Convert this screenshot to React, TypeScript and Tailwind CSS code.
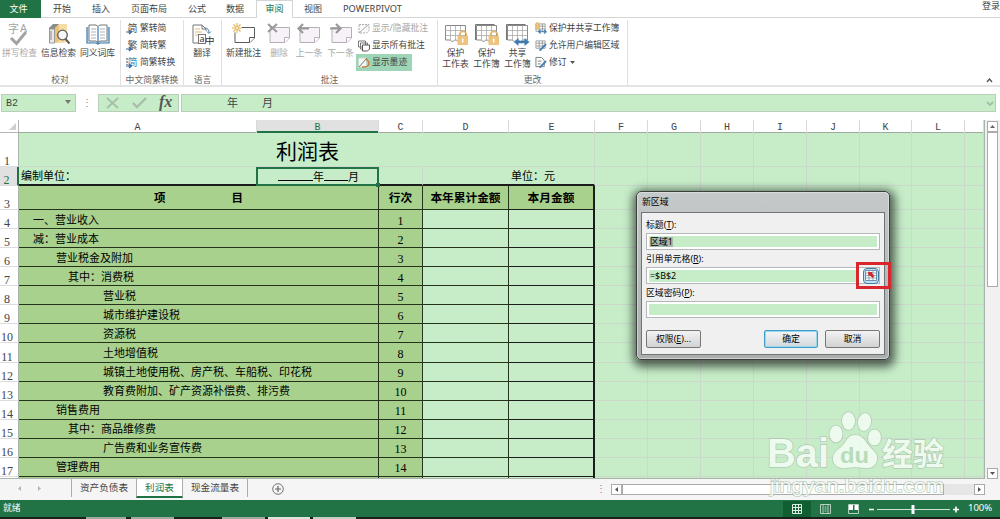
import React from 'react';

const COLS = 'grid grid-cols-[19px_238px_122px_44px_86px_86px_53px_53px_53px_53px_53px_52px_53px_19px]';
const LETTERS = ['A', 'B', 'C', 'D', 'E', 'F', 'G', 'H', 'I', 'J', 'K', 'L', ''];
const EXTRA = [0, 1, 2, 3, 4, 5, 6, 7];

interface Item {
  name: string;
  indent: string;
}

const ITEMS: Item[] = [
  { name: '一、营业收入', indent: 'pl-3.5' },
  { name: '减：营业成本', indent: 'pl-3.5' },
  { name: '营业税金及附加', indent: 'pl-[37px]' },
  { name: '其中：消费税', indent: 'pl-[49px]' },
  { name: '营业税', indent: 'pl-[84px]' },
  { name: '城市维护建设税', indent: 'pl-[84px]' },
  { name: '资源税', indent: 'pl-[84px]' },
  { name: '土地增值税', indent: 'pl-[84px]' },
  { name: '城镇土地使用税、房产税、车船税、印花税', indent: 'pl-[84px]' },
  { name: '教育费附加、矿产资源补偿费、排污费', indent: 'pl-[84px]' },
  { name: '销售费用', indent: 'pl-[37px]' },
  { name: '其中：商品维修费', indent: 'pl-[49px]' },
  { name: '广告费和业务宣传费', indent: 'pl-[84px]' },
  { name: '管理费用', indent: 'pl-[37px]' },
];

/* ---------- icons ---------- */

const SpellIcon = () => (
  <svg width="26" height="24" viewBox="0 0 26 24" className="overflow-visible">
    <text x="1" y="10" fontSize="11" fill="#a3a3a3" fontFamily="Noto Sans CJK SC, sans-serif">字</text>
    <text x="13" y="9" fontSize="11" fill="#a3a3a3" fontFamily="Noto Sans, sans-serif">A</text>
    <path d="M4 15l5.500 5.500L19 9" fill="none" stroke="#a3a3a3" strokeWidth="3" />
  </svg>
);

const ResearchIcon = () => (
  <svg width="24" height="24" viewBox="0 0 24 24">
    <path d="M2 5l4-4h7l-3 4v15H2z" fill="#8b8b8b" />
    <path d="M2.500 6h5v14h-5z" fill="#e9e9e9" stroke="#999" />
    <path d="M4 8v9" stroke="#888" />
    <path d="M8 5l4-4h8v17l-3 2H8z" fill="#f6dca6" />
    <path d="M8 5l4-3v16l-4 2z" fill="#eec378" />
    <circle cx="15.500" cy="12" r="4.800" fill="#f7f7f7" stroke="#5d5d5d" strokeWidth="1.300" />
    <path d="M18.500 16l4 4.500" stroke="#5d5d5d" strokeWidth="2" />
  </svg>
);

const ThesaurusIcon = () => (
  <svg width="24" height="24" viewBox="0 0 24 24">
    <path d="M1 4v16h9l2 1 2-1h9V4" fill="#d5e7f4" stroke="#3b79ad" strokeWidth="1.200" />
    <path d="M3 2h7l2 1.500L14 2h7v16h-7l-2 1.500-2-1.500H3z" fill="#fff" stroke="#777" />
    <path d="M12 4v16" stroke="#3b79ad" strokeWidth="1.200" />
    <path d="M5 6h5M5 9h5M5 12h5M5 15h5M14 6h5M14 9h5M14 12h5M14 15h5" stroke="#a5b1bb" />
  </svg>
);

const ConvertIcon = ({ glyph, both }: { glyph: string; both?: boolean }) => (
  <svg width="12" height="13" viewBox="0 0 12 13" className="overflow-visible">
    <text x="1.500" y="9.500" fontSize="10" fill={both ? '#3b8fb5' : '#555'} fontFamily="Noto Sans CJK SC, sans-serif">
      {glyph}
    </text>
    <path d="M0 10h5M3 8l2.500 2L3 12" fill="none" stroke="#2a6bab" strokeWidth="1.200" />
    {both && <path d="M1 2v7" stroke="#444" strokeDasharray="2 1" />}
  </svg>
);

const TranslateIcon = () => (
  <svg width="24" height="24" viewBox="0 0 24 24" className="overflow-visible">
    <path d="M10 20H3V2h9l4 4v2" fill="#fff" stroke="#777" />
    <path d="M12 2v4h4" fill="none" stroke="#777" />
    <path d="M5 6h5M5 9h7M5 12h3" stroke="#e3b96c" />
    <path d="M15 5c3 0 4 2 4 5M17 8.500l2 2 2-2" fill="none" stroke="#4a83b5" />
    <rect x="8.500" y="11.500" width="7" height="9" fill="#fff" stroke="#777" />
    <text x="9.500" y="19" fontSize="9" fill="#333" fontFamily="Noto Sans, sans-serif">a</text>
    <text x="15" y="21" fontSize="9.500" fill="#333" fontFamily="Noto Sans CJK SC, sans-serif">中</text>
  </svg>
);

const NoteIcon = ({ kind }: { kind: 'new' | 'delete' | 'prev' | 'next' }) => {
  const active = kind === 'new';
  const line = active ? '#5c5c5c' : '#b5b0b5';
  return (
    <svg width="24" height="24" viewBox="0 0 24 24">
      <path d="M3 4.500h19.500V15l-4.500 4.500H3z" fill={active ? '#fff' : '#f7f2f8'} stroke={line} />
      <path d="M22.500 14.500H17.500v5" fill="#fff" stroke={line} />
      {kind === 'new' && (
        <>
          <circle cx="5" cy="5" r="5" fill="#fff" />
          <path d="M5 0v3M5 7v3M0 5h3M7 5h3M1.500 1.500l2 2M6.500 6.500l2 2M8.500 1.500l-2 2M3.500 6.500l-2 2" stroke="#e0b04f" strokeWidth="1.100" />
          <circle cx="5" cy="5" r="1.500" fill="none" stroke="#e0b04f" />
        </>
      )}
      {kind === 'delete' && <path d="M1 1l9 8M10 1L1 9" stroke="#999" strokeWidth="2" />}
      {kind === 'prev' && <path d="M12 5.500H2M6 1L1.500 5.500 6 10" fill="none" stroke="#999" strokeWidth="2.200" />}
      {kind === 'next' && <path d="M1 5.500h10M7 1l4.500 4.500L7 10" fill="none" stroke="#999" strokeWidth="2.200" />}
    </svg>
  );
};

const ToggleNoteIcon = () => (
  <svg width="12" height="12" viewBox="0 0 12 12">
    <path d="M1 1.500h10v6L8.500 10H1z" fill="#faf8fa" stroke="#aaa" strokeDasharray="2 1" />
    <path d="M1 10L10 2" stroke="#aaa" />
  </svg>
);

const AllNotesIcon = () => (
  <svg width="12" height="12" viewBox="0 0 12 12">
    <path d="M.500 1h7v6h-7zM2.500 3h7v6h-7z" fill="#fff" stroke="#777" />
    <path d="M4.500 5h7v4l-2 2h-5z" fill="#fff" stroke="#555" />
  </svg>
);

const InkIcon = () => (
  <svg width="12" height="12" viewBox="0 0 12 12">
    <path d="M.500 1h8v9h-8z" fill="#f3f8f4" stroke="#c5dccd" />
    <path d="M1 10L9 1" stroke="#777" />
    <path d="M4 10c5 0 7-1 7-3.500S9.500 3 7.500 2" fill="none" stroke="#c9783f" strokeWidth="1.300" />
  </svg>
);

const SheetIcon = ({ kind }: { kind: 'lock' | 'book' | 'share' }) => (
  <svg width="26" height="24" viewBox="0 0 26 24">
    {kind !== 'lock' && <path d="M1.500 17V1.500h19" fill="none" stroke="#777" />}
    <path d="M2.500 2.500h20V17h-5l-2 2-2-2h-2l-2 2-2-2h-5z" fill="#fff" stroke="#888" />
    <path d="M2.500 7.500h20M2.500 12.500h20M7.500 3v14M12.500 3v14M17.500 3v14" stroke="#aaa" strokeWidth=".8" />
    {kind === 'share' ? (
      <path d="M9 19l4.500-4v2.700h6V15l5 4-5 4v-2.700h-6V23z" fill="#3f7cb4" />
    ) : (
      <>
        <path d="M16.500 14v-2a3.500 3.500 0 017 0v2" fill="none" stroke="#e8b762" strokeWidth="1.600" />
        <rect x="14.500" y="13" width="10.500" height="9" fill="#edc47c" />
        <path d="M19.700 15.500v4" stroke="#fff" strokeWidth="1.500" />
      </>
    )}
  </svg>
);

const SmallSheetIcon = ({ kind }: { kind: 'share' | 'range' | 'track' }) => (
  <svg width="12" height="13" viewBox="0 0 13 13">
    {kind === 'track' ? (
      <path d="M1 1h6l3 3v7H1zM3 5h4M3 8h3" fill="#fff" stroke="#777" />
    ) : (
      <path d="M1 1.500h10v8H1zM1 4h10M1 7h10M4.500 1.500v8M8 1.500v8" fill="#fff" stroke="#888" strokeWidth=".8" />
    )}
    {kind === 'share' ? (
      <>
        <rect x="0" y="2.500" width="5" height="4.500" fill="#edbe6c" />
        <path d="M1 3V1.500a1.500 1.500 0 013 0V3" fill="none" stroke="#e8b762" />
        <path d="M4 10h8M6 8l-2 2 2 2M10 8l2 2-2 2" fill="none" stroke="#3f7cb4" strokeWidth="1.300" />
      </>
    ) : (
      <path d="M5 12l7-7" stroke="#3f7cb4" strokeWidth="2" />
    )}
  </svg>
);

/* ---------- ribbon ---------- */

interface ButtonProps {
  icon: React.ReactNode;
  lines: string[];
  width: string;
  disabled?: boolean;
}

const BigButton: React.FC<ButtonProps> = ({ icon, lines, width, disabled }) => (
  <div className={`flex shrink-0 flex-col items-center whitespace-nowrap ${width} ${disabled ? 'text-[#a8a8a8]' : 'text-[#444]'}`}>
    <div className="h-[25px]">{icon}</div>
    {lines.map((line) => (
      <span key={line} className="leading-[11px]">{line}</span>
    ))}
  </div>
);

const SmallButton = ({ icon, label, className = '' }: { icon: React.ReactNode; label: string; className?: string }) => (
  <div className={`flex h-[17px] items-center gap-0.5 whitespace-nowrap ${className}`}>
    {icon}
    <span>{label}</span>
  </div>
);

const Group = ({ label, width, children }: { label: string; width: string; children: React.ReactNode }) => (
  <div className={`flex h-[65px] shrink-0 flex-col justify-between border-r border-[#e1e1e1] ${width}`}>
    <div className="flex">{children}</div>
    <div className="text-center leading-[10px] text-[#666]">{label}</div>
  </div>
);

const TabBar = () => (
  <div className="flex h-[18px] shrink-0 text-[9px] leading-[17px] text-[#444]">
    <div className="w-[41px] bg-[#217346] pr-1 text-center text-white">文件</div>
    <div className="flex flex-1 border-b border-[#d5d5d5] whitespace-nowrap">
      <span className="w-[39px] pl-3">开始</span>
      <span className="w-[51px] pl-3">插入</span>
      <span className="w-[57px]">页面布局</span>
      <span className="w-[38px]">公式</span>
      <span className="w-[30px]">数据</span>
      <span className="h-[18px] w-[37px] border-x border-t border-[#d5d5d5] bg-white text-center leading-[15px] text-[#217346]">审阅</span>
      <span className="w-[50px] pl-[11px]">视图</span>
      <span className="text-[9.3px]">POWERPIVOT</span>
      <span className="ml-auto leading-[12px]">登录</span>
    </div>
  </div>
);

const Ribbon = () => (
  <div className="flex h-[69px] border-b-2 border-[#e4e4e4] pt-0.5 text-[8.8px] text-[#444]">
    <Group label="校对" width="w-[121px]">
      <div className="flex pt-[3px]">
        <BigButton icon={<SpellIcon />} lines={['拼写检查']} width="w-[39px]" disabled />
        <BigButton icon={<ResearchIcon />} lines={['信息检索']} width="w-[39px]" />
        <BigButton icon={<ThesaurusIcon />} lines={['同义词库']} width="w-[39px]" />
      </div>
    </Group>
    <Group label="中文简繁转换" width="w-[63px]">
      <div className="pl-[5px]">
        <SmallButton icon={<ConvertIcon glyph="简" />} label="繁转简" />
        <SmallButton icon={<ConvertIcon glyph="繁" />} label="简转繁" />
        <SmallButton icon={<ConvertIcon glyph="简" both />} label="简繁转换" />
      </div>
    </Group>
    <Group label="语言" width="w-[38px]">
      <div className="pt-[3px]">
        <BigButton icon={<TranslateIcon />} lines={['翻译']} width="w-[36px]" />
      </div>
    </Group>
    <Group label="批注" width="w-[216px]">
      <div className="flex pt-[3px]">
        <BigButton icon={<NoteIcon kind="new" />} lines={['新建批注']} width="w-[43px]" />
        <BigButton icon={<NoteIcon kind="delete" />} lines={['删除']} width="w-[28px]" disabled />
        <BigButton icon={<NoteIcon kind="prev" />} lines={['上一条']} width="w-[32px]" disabled />
        <BigButton icon={<NoteIcon kind="next" />} lines={['下一条']} width="w-[31px]" disabled />
      </div>
      <div>
        <SmallButton icon={<ToggleNoteIcon />} label="显示/隐藏批注" className="px-0.5 text-[#a8a8a8]" />
        <SmallButton icon={<AllNotesIcon />} label="显示所有批注" className="px-0.5" />
        <SmallButton icon={<InkIcon />} label="显示墨迹" className="w-14 bg-[#9fd5b7] px-0.5" />
      </div>
    </Group>
    <Group label="更改" width="w-[190px]">
      <div className="flex pt-[3px] pl-0.5">
        <BigButton icon={<SheetIcon kind="lock" />} lines={['保护', '工作表']} width="w-[31px]" />
        <BigButton icon={<SheetIcon kind="book" />} lines={['保护', '工作簿']} width="w-[31px]" />
        <BigButton icon={<SheetIcon kind="share" />} lines={['共享', '工作簿']} width="w-[31px]" />
      </div>
      <div className="pl-0.5">
        <SmallButton icon={<SmallSheetIcon kind="share" />} label="保护并共享工作簿" />
        <SmallButton icon={<SmallSheetIcon kind="range" />} label="允许用户编辑区域" />
        <div className="flex items-center gap-[3px]">
          <SmallButton icon={<SmallSheetIcon kind="track" />} label="修订" />
          <svg width="5" height="3"><path d="M0 0h5L2.500 3z" fill="#555" /></svg>
        </div>
      </div>
    </Group>
    <div className="flex flex-1 items-end justify-end pr-[7px] pb-0.5">
      <svg width="7" height="5" viewBox="0 0 7 5"><path d="M1 4l2.500-3L6 4" fill="none" stroke="#555" strokeWidth="1.400" /></svg>
    </div>
  </div>
);

const FormulaBar = () => (
  <div className="flex h-[33px] items-start pt-[7px] text-[#444]">
    <div className="ml-px flex h-[18px] w-[75px] items-center justify-between border border-[#b9cfba] bg-[#c6edc8] pr-1 pl-1 font-['Liberation_Mono',monospace] text-[10px]">
      B2
      <svg width="6" height="4" className="mb-0.5"><path d="M0 0h6L3 4z" fill="#777" /></svg>
    </div>
    <div className="w-[22px] text-center text-[10px] leading-[17px] text-[#888]">⋮</div>
    <div className="flex h-[18px] w-[81px] items-center border border-[#b9cfba] bg-[#c6edc8]">
      <svg width="79" height="16" viewBox="0 0 79 16">
        <path d="M8 3l11 10M19 3L8 13" stroke="#a9bdaa" strokeWidth="1.800" />
        <path d="M34 8l4 4 9-9" fill="none" stroke="#a9bdaa" strokeWidth="2.400" />
        <text x="60" y="12" fontSize="16" fontStyle="italic" fontWeight="bold" fill="#555" fontFamily="Liberation Serif, serif">fx</text>
      </svg>
    </div>
    <div className="ml-0.5 flex h-[18px] w-[815px] items-center border border-[#b9cfba] bg-[#c6edc8] pl-[45px] text-[11px]">
      <span>年</span>
      <span className="ml-6">月</span>
      <svg width="8" height="5" className="mr-px ml-auto"><path d="M1 1l3 3 3-3" fill="none" stroke="#a9bdaa" strokeWidth="1.800" /></svg>
    </div>
  </div>
);

/* ---------- sheet ---------- */

const RowNumber = ({ n, active }: { n: number; active?: boolean }) => (
  <div
    className={`flex items-end justify-center border-b border-b-[#dcdcdc] pr-1 font-['Liberation_Serif',serif] text-[12px] leading-[10px] font-normal ${
      active ? 'border-r-2 border-r-[#217346] bg-[#e1e1e1] text-[#217346]' : 'border-r border-r-[#a9b5a9] bg-white text-[#444]'
    }`}
  >
    {n}
  </div>
);

const EmptyCells = () => (
  <>
    {EXTRA.map((i) => (
      <div key={i} className="border-r border-b border-[#cbd8cb]" />
    ))}
  </>
);

const Sheet = () => (
  <div className="h-[359px] w-[985px] shrink-0 overflow-hidden border-r border-b border-[#a9b5a9] bg-[#c6edc8] text-[11px] leading-none text-black">
    <div className={`h-[13px] bg-white ${COLS}`}>
      <div className="flex items-end justify-end border-r border-b border-[#b5b5b5] pr-0.5 pb-0.5">
        <svg width="7" height="7"><path d="M7 0v7H0z" fill="#cfcfcf" /></svg>
      </div>
      {LETTERS.map((letter, i) => (
        <div
          key={i}
          className={`flex h-[13px] items-end justify-center border-r border-r-[#dadada] font-['Liberation_Mono',monospace] text-[10px] leading-[10px] ${
            letter === 'B' ? 'bg-[#e1e1e1] text-[#217346] shadow-[inset_0_-2px_0_#217346]' : 'text-[#444] shadow-[inset_0_-1px_0_#9fab9f]'
          }`}
        >
          {letter}
        </div>
      ))}
    </div>

    <div className={`h-[34px] ${COLS}`}>
      <RowNumber n={1} />
      <div className="col-span-5 flex items-center justify-center border-r border-b border-[#cbd8cb] pt-0.5 pl-0.5 font-['Noto_Sans_CJK_SC',sans-serif] text-[21px]">
        利润表
      </div>
      <EmptyCells />
    </div>

    <div className={`h-[19px] ${COLS}`}>
      <RowNumber n={2} active />
      <div className="flex items-center border-b-2 border-[#1c1c1c] pl-0.5">编制单位：</div>
      <div className="relative -ml-px flex items-center justify-end border-2 border-[#217346] pr-[18px]">
        <span className="h-[9px] w-[35px] border-b border-black" />
        年
        <span className="h-[9px] w-6 border-b border-black" />
        月
        <span className="absolute -right-[3px] -bottom-[3px] h-1 w-1 bg-[#217346]" />
      </div>
      <div className="border-r border-b-2 border-r-[#cbd8cb] border-b-[#1c1c1c]" />
      <div className="border-b-2 border-[#1c1c1c]" />
      <div className="flex items-center border-r border-b-2 border-r-[#cbd8cb] border-b-[#1c1c1c] pl-0.5">单位：元</div>
      <EmptyCells />
    </div>

    <div className={`h-6 font-bold ${COLS}`}>
      <RowNumber n={3} />
      <div className="col-span-2 flex items-center justify-center gap-[66px] border-r border-b border-[#26331c] bg-[#a9d18e] text-[11.5px]">
        <span>项</span>
        <span>目</span>
      </div>
      <div className="flex items-center justify-center border-r border-b border-[#26331c] bg-[#a9d18e] text-[11.7px]">行次</div>
      <div className="flex items-center justify-center border-r border-b border-[#26331c] bg-[#a9d18e] text-[11.7px]">本年累计金额</div>
      <div className="flex items-center justify-center border-r-2 border-b border-[#1c1c1c] bg-[#a9d18e] text-[11.7px]">本月金额</div>
      <EmptyCells />
    </div>

    {ITEMS.map((item, i) => (
      <div key={item.name} className={`h-[19.07px] ${COLS}`}>
        <RowNumber n={i + 4} />
        <div className={`col-span-2 flex items-center border-r border-b border-[#26331c] bg-[#a9d18e] ${item.indent}`}>{item.name}</div>
        <div className="flex items-center justify-center border-r border-b border-[#26331c] bg-[#a9d18e] pt-[3px] font-['Liberation_Serif',serif] text-[12px]">
          {i + 1}
        </div>
        <div className="border-r border-b border-[#26331c]" />
        <div className="border-r-2 border-b border-[#1c1c1c]" />
        <EmptyCells />
      </div>
    ))}

    <div className={`h-2.5 ${COLS}`}>
      <div className="border-r border-[#a9b5a9] bg-white" />
      <div className="col-span-2 border-r border-[#26331c] bg-[#a9d18e]" />
      <div className="border-r border-[#26331c] bg-[#a9d18e]" />
      <div className="border-r border-[#26331c]" />
      <div className="border-r-2 border-[#1c1c1c]" />
      <EmptyCells />
    </div>
  </div>
);

const VerticalScroll = () => (
  <div className="flex flex-1 flex-col items-center bg-[#f1f1f1] pt-px">
    <div className="flex h-[11px] w-[11px] shrink-0 items-center justify-center border border-[#ababab] bg-white">
      <svg width="5" height="3"><path d="M0 3h5L2.500 0z" fill="#666" /></svg>
    </div>
    <div className="h-[155px] w-[11px] border border-[#ababab] bg-white" />
    <div className="mt-auto flex h-[11px] w-[11px] items-center justify-center border border-[#ababab] bg-white">
      <svg width="5" height="3"><path d="M0 0h5L2.500 3z" fill="#555" /></svg>
    </div>
  </div>
);

const SheetTabs = () => (
  <div className="flex h-[21px] shrink-0 items-start bg-[#f5f5f5] text-[9.6px] leading-[18px] text-[#444]">
    <div className="flex h-[18px] w-[72px] items-center gap-[17px] border-r border-[#ababab] pl-[18px]">
      <svg width="3" height="5"><path d="M3 0v5L0 2.500z" fill="#b5b5b5" /></svg>
      <svg width="3" height="5"><path d="M0 0v5l3-2.500z" fill="#b5b5b5" /></svg>
    </div>
    <div className="w-16 text-center">资产负债表</div>
    <div className="h-[19px] w-[47px] border-x border-b-2 border-x-[#ababab] border-b-[#217346] bg-white text-center text-[#217346]">利润表</div>
    <div className="h-[18px] w-[65px] border-r border-[#ababab] text-center">现金流量表</div>
    <svg width="12" height="12" viewBox="0 0 12 12" className="mt-1 ml-6">
      <circle cx="6" cy="6" r="5.300" fill="none" stroke="#777" />
      <path d="M6 3v6M3 6h6" stroke="#666" strokeWidth="1.200" />
    </svg>
    <div className="ml-[312px] w-2 text-[10px] text-[#888]">⋮</div>
    <div className="mt-[5px] ml-[7px] flex h-[11px] w-[374px] bg-[#e6e6e6]">
      <div className="flex w-[11px] items-center justify-center border border-[#ababab] bg-white">
        <svg width="3" height="5"><path d="M3 0v5L0 2.500z" fill="#555" /></svg>
      </div>
      <div className="w-[322px] border border-[#ababab] bg-white" />
      <div className="ml-auto flex w-[11px] items-center justify-center border border-[#ababab] bg-white">
        <svg width="3" height="5"><path d="M0 0v5l3-2.500z" fill="#555" /></svg>
      </div>
    </div>
  </div>
);

const StatusBar = () => (
  <div className="flex h-[17px] shrink-0 items-center bg-[#217346] pl-[3px] text-[8.8px] text-white">
    <span>就绪</span>
    <div className="ml-auto flex h-4 w-7 items-center justify-center bg-[#0f5f33]">
      <svg width="10" height="10" viewBox="0 0 10 10"><path d="M.500.500h9v9h-9zM.500 3.500h9M.500 6.500h9M3.500.500v9M6.500.500v9" fill="none" stroke="#dfece4" /></svg>
    </div>
    <div className="flex w-7 justify-center">
      <svg width="11" height="10" viewBox="0 0 11 10"><path d="M.500.500h10v9H.500zM3 1v8M8 1v8M4.500 3h2M4.500 5h2M4.500 7h2" fill="none" stroke="#b5d2c1" /></svg>
    </div>
    <div className="flex w-7 justify-center">
      <svg width="11" height="10" viewBox="0 0 11 10"><path d="M.500.500h10v9H.500z" fill="none" stroke="#b5d2c1" /><path d="M1 1h4v5H1zM6.500 1H10v5H6.500z" fill="#fff" /></svg>
    </div>
    <svg width="92" height="12" viewBox="0 0 92 12" className="ml-0.5">
      <path d="M0 6.500h5M84 6.500h6M87 3.500v6" stroke="#fff" strokeWidth="1.600" />
      <path d="M8 6.500h73" stroke="#cfe3d7" />
      <path d="M44 2v9" stroke="#fff" strokeWidth="3" />
    </svg>
    <span className="w-[39px] pl-[7px] text-[9.5px]">100%</span>
  </div>
);

const Taskbar = () => (
  <div className="flex h-[2px] flex-1 bg-[#18211b] pl-[86px]">
    <div className="w-10 bg-[#a3a8a4]" />
    <div className="ml-[5px] w-[43px] bg-[#a3a8a4]" />
    <div className="ml-12 w-[43px] bg-[#a3a8a4]" />
    <div className="ml-[3px] w-[42px] bg-[#dfe2df]" />
    <div className="ml-[3px] w-[43px] bg-[#c8ccc9]" />
  </div>
);

/* ---------- dialog ---------- */

const FieldLabel = ({ text, hotkey }: { text: string; hotkey: string }) => (
  <div className="h-[17px] leading-[17px]">
    {text}(<u>{hotkey}</u>):
  </div>
);

const PickerIcon = () => (
  <svg width="12" height="11" viewBox="0 0 12 11" className="shrink-0">
    <path d="M.500.500h11v10H.500z" fill="#fff" stroke="#6d8fb0" />
    <path d="M1 3h10M1 5.500h10M1 8h10M4 1v9M8 1v9" stroke="#7f98b8" strokeWidth=".8" />
    <path d="M3 2h4.500L7 3.500 9.500 6 7.500 8 5 5.500 3.500 6z" fill="#d02a2a" />
  </svg>
);

const NewRangeDialog = () => (
  <div className="absolute top-[191px] left-[636px] h-[169px] w-[254px] rounded-[5px] border border-[#3b3f3e] bg-linear-to-b from-[#c6c9ca] to-[#aaaeaf] px-1 text-[8.9px] text-black shadow-[1px_3px_10px_4px_rgba(0,0,0,0.6)] ring-1 ring-[#e8e8e8]/60 ring-inset">
    <div className="h-5 pl-px leading-5">新区域</div>
    <div className="h-[143px] border border-[#6f7475] bg-[#f0f0f0] px-1 pt-[3px]">
      <FieldLabel text="标题" hotkey="T" />
      <div className="flex h-[17px] border border-[#b3b7ba] bg-white p-0.5">
        <div className="flex flex-1 items-center bg-[#c6edc8] pl-px">
          <span className="bg-[#a9b9ab] leading-[10px]">区域1</span>
        </div>
      </div>
      <FieldLabel text="引用单元格" hotkey="R" />
      <div className="flex h-[17px] items-center justify-between border border-[#b3b7ba] bg-white py-0.5 pl-0.5">
        <div className="w-[208px] bg-[#c6edc8] pl-px leading-[12px]">=$B$2</div>
        <div className="flex h-4 w-4 shrink-0 items-center justify-center rounded-sm border border-[#3f7c9f] bg-[#c3e2f0]">
          <PickerIcon />
        </div>
      </div>
      <FieldLabel text="区域密码" hotkey="P" />
      <div className="flex h-[17px] border border-[#b3b7ba] bg-white p-0.5">
        <div className="flex-1 bg-[#c6edc8]" />
      </div>
      <div className="mt-3 flex leading-[16px]">
        <button className="h-[18px] w-[55px] rounded-xs border border-[#777] bg-linear-to-b from-[#f3f3f3] to-[#d2d2d2]">
          权限(<u>E</u>)...
        </button>
        <button className="ml-auto h-[18px] w-[54px] rounded-xs border border-[#3c9ec9] bg-linear-to-b from-[#f3f6f8] to-[#d2d8db] ring-1 ring-[#9bd6ef] ring-inset">
          确定
        </button>
        <button className="ml-[7px] h-[18px] w-[55px] rounded-xs border border-[#777] bg-linear-to-b from-[#f3f3f3] to-[#d2d2d2]">取消</button>
      </div>
    </div>
    <div className="absolute top-[70px] left-[219px] h-[27px] w-[35px] border-[3px] border-[#d8262c]" />
  </div>
);

const Watermark = () => (
  <svg width="190" height="95" viewBox="0 0 190 95" className="pointer-events-none absolute top-[405px] left-[762px] opacity-75">
    <g fill="#fbfffb" stroke="#a9bfab" strokeWidth="1.500" paintOrder="stroke">
      <text x="5" y="62" fontSize="40" fontWeight="bold" textLength="62" lengthAdjust="spacingAndGlyphs" fontFamily="Liberation Sans, sans-serif">Bai</text>
      <ellipse cx="74" cy="29" rx="6.500" ry="8.500" />
      <ellipse cx="86.500" cy="16" rx="6.500" ry="9" />
      <ellipse cx="102.500" cy="17" rx="6.500" ry="9" transform="rotate(10 102.500 17)" />
      <ellipse cx="112.500" cy="32.500" rx="6.500" ry="8" />
      <path d="M93 30c9 0 11 8 15 12 4 4 8 7 7 13-1 7-8 9-13 8-6-1-12-1-18 0-6 1-13-2-13-9 0-6 4-9 8-12 5-4 6-12 14-12z" />
      <text x="120" y="60" fontSize="31" fontWeight="bold" textLength="62" lengthAdjust="spacingAndGlyphs" fontFamily="Noto Sans CJK SC, sans-serif">经验</text>
      <text x="8" y="87" fontSize="19" textLength="174" lengthAdjust="spacingAndGlyphs" fontFamily="Liberation Sans, sans-serif">jingyan.baidu.com</text>
    </g>
    <text x="78" y="58" fontSize="22" fontWeight="bold" fill="#b4d6b7" textLength="29" lengthAdjust="spacingAndGlyphs" fontFamily="Liberation Sans, sans-serif">du</text>
  </svg>
);

export default function App() {
  return (
    <div className="relative flex h-[519px] w-[1000px] flex-col overflow-hidden bg-white font-['Noto_Sans','Noto_Sans_CJK_SC',sans-serif]">
      <TabBar />
      <Ribbon />
      <FormulaBar />
      <div className="flex">
        <Sheet />
        <VerticalScroll />
      </div>
      <SheetTabs />
      <StatusBar />
      <Taskbar />
      <Watermark />
      <NewRangeDialog />
    </div>
  );
}
